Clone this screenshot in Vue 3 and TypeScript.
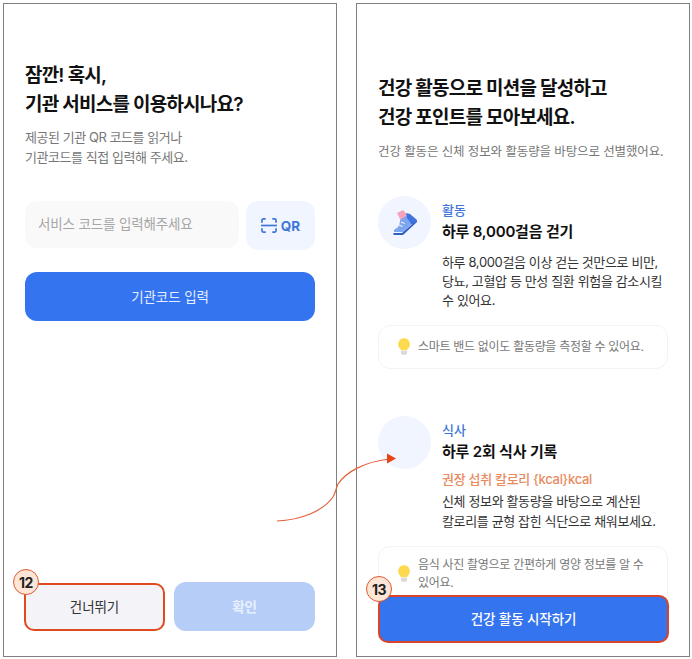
<template>
  <div class="page">
    <!-- 기관 코드 화면 -->
    <section class="phone phone-left">
      <h1 class="title">잠깐! 혹시,<br />기관 서비스를 이용하시나요?</h1>
      <p class="sub">제공된 기관 QR 코드를 읽거나<br />기관코드를 직접 입력해 주세요.</p>
      <div class="code-row">
        <div class="code-input">서비스 코드를 입력해주세요</div>
        <div class="qr-btn">
          <svg width="16" height="15" viewBox="0 0 17 16" fill="none" stroke="#3f76d8" stroke-width="1.8">
            <path d="M1 5V2.400C1 1.600 1.600 1 2.400 1H5" />
            <path d="M12 1h2.600C15.400 1 16 1.600 16 2.400V5" />
            <path d="M1 11v2.600c0 .8.6 1.400 1.400 1.400H5" />
            <path d="M12 15h2.600c.8 0 1.400-.6 1.400-1.400V11" />
            <path d="M0 8h17" />
          </svg>
          <span>QR</span>
        </div>
      </div>
      <button class="btn btn-primary btn-code">기관코드 입력</button>
      <div class="spacer"></div>
      <div class="bottom-row">
        <div class="skip-wrap">
          <button class="btn btn-skip">건너뛰기</button>
          <span class="badge badge-12">12</span>
        </div>
        <button class="btn btn-confirm">확인</button>
      </div>
    </section>

    <!-- 건강 활동 안내 화면 -->
    <section class="phone phone-right">
      <h1 class="title">건강 활동으로 미션을 달성하고<br />건강 포인트를 모아보세요.</h1>
      <p class="sub sub-right">건강 활동은 신체 정보와 활동량을 바탕으로 선별했어요.</p>

      <div v-for="item in missions" :key="item.label" class="mission">
        <div class="mission-head">
          <div class="circle">
            <svg v-if="item.shoe" width="26" height="27" viewBox="0 0 26 27">
              <path d="M5 4 11 1l5 6-7 5z" fill="#f7a3bd" />
              <path d="M8 11l6-4 10 4-13 12H2c-.5-2 .5-3 2-3.500 2-.5 4-4 4-8.500z" fill="#7da6f0" />
              <path d="M14 4l4 1 7 6-5 5-5-7z" fill="#3f74dc" />
              <path d="M1.500 24H10l15-13v2L11 26H2.500c-1 0-1.500-1-1-2z" fill="#2f5fc4" />
              <path d="M7 16l3.500 1.500M9 13l3.500 1.500" stroke="#fff" stroke-width="1" />
            </svg>
          </div>
          <div class="mission-text">
            <div class="label">{{ item.label }}</div>
            <div class="mission-title">{{ item.title }}</div>
            <div v-if="item.kcal" class="kcal">{{ item.kcal }}</div>
            <p class="desc" :class="{ 'desc-tight': item.kcal }">
              <template v-for="(line, i) in item.desc" :key="i">{{ line }}<br /></template>
            </p>
          </div>
        </div>
        <div class="tip" :class="{ 'tip-multi': item.tip.length > 1 }">
          <svg class="bulb" width="12" height="17" viewBox="0 0 14 19">
            <path d="M7 0a6.800 6.800 0 0 1 4 12.300V14H3v-1.700A6.800 6.800 0 0 1 7 0z" fill="#fdd94f" />
            <path d="M3.500 14.500h7V17c0 1-1 2-2 2h-3c-1 0-2-1-2-2z" fill="#d9d9de" />
          </svg>
          <span>
            <template v-for="(line, i) in item.tip" :key="i">{{ line }}<br v-if="i < item.tip.length - 1" /></template>
          </span>
        </div>
      </div>

      <div class="start-wrap">
        <button class="btn btn-primary btn-start">건강 활동 시작하기</button>
        <span class="badge badge-13">13</span>
      </div>
    </section>

    <!-- 화면 간 연결 화살표 -->
    <svg class="arrow" width="692" height="659" viewBox="0 0 692 659" fill="none">
      <path d="M277 521C300 520 322 512 333 497C336 492 336 488 338 484C346 472 364 462 389 459" stroke="#e4603a" stroke-width="1.200" />
      <path d="M396 458.500 387 453.500V463.500Z" fill="#ea4312" />
    </svg>
  </div>
</template>

<script setup lang="ts">
interface Mission {
  label: string;
  title: string;
  kcal?: string;
  desc: string[];
  tip: string[];
  shoe: boolean;
}

const missions: Mission[] = [
  {
    label: "활동",
    title: "하루 8,000걸음 걷기",
    desc: [
      "하루 8,000걸음 이상 걷는 것만으로 비만,",
      "당뇨, 고혈압 등 만성 질환 위험을 감소시킬",
      "수 있어요.",
    ],
    tip: ["스마트 밴드 없이도 활동량을 측정할 수 있어요."],
    shoe: true,
  },
  {
    label: "식사",
    title: "하루 2회 식사 기록",
    kcal: "권장 섭취 칼로리 {kcal}kcal",
    desc: ["신체 정보와 활동량을 바탕으로 계산된", "칼로리를 균형 잡힌 식단으로 채워보세요."],
    tip: ["음식 사진 촬영으로 간편하게 영양 정보를 알 수", "있어요."],
    shoe: false,
  },
];
</script>

<style>
html,
body {
  margin: 0;
  background: #fff;
}
</style>

<style scoped>
.page {
  position: relative;
  width: 692px;
  height: 659px;
  box-sizing: border-box;
  padding: 3px;
  display: flex;
  gap: 19px;
  font-family: Inter, "Noto Sans CJK KR", sans-serif;
  color: #111;
  overflow: hidden;
}

.phone {
  position: relative;
  width: 334px;
  height: 654px;
  box-sizing: border-box;
  border: 1px solid #808080;
  padding: 58px 21px 0;
  display: flex;
  flex-direction: column;
  flex: none;
  background: #fff;
}

.phone-right {
  padding-top: 71px;
  overflow: hidden;
}

.title {
  margin: 0;
  font-size: 19px;
  line-height: 28.500px;
  font-weight: 600;
  letter-spacing: -0.8px;
  color: #111;
}

.sub {
  margin: 9px 0 0;
  font-size: 13px;
  line-height: 19.500px;
  color: #777;
  letter-spacing: -0.45px;
}

.sub-right {
  margin-top: 10px;
  font-size: 12.500px;
  letter-spacing: -0.12px;
  white-space: nowrap;
}

.code-row {
  margin-top: 34px;
  display: flex;
  gap: 7px;
  align-items: flex-start;
}

.code-input {
  width: 214px;
  height: 47px;
  box-sizing: border-box;
  padding: 0 0 3px 13px;
  display: flex;
  align-items: center;
  border-radius: 12px;
  background: #f9f9f9;
  color: #a6a6a6;
  font-size: 13.500px;
  letter-spacing: -0.15px;
}

.qr-btn {
  width: 69px;
  height: 49px;
  border-radius: 12px;
  background: #f0f5ff;
  display: flex;
  align-items: center;
  justify-content: center;
  gap: 4px;
  color: #3f76d8;
  font-size: 13.500px;
  font-weight: 700;
}

.btn {
  border: 0;
  padding: 0 0 2px;
  font-family: inherit;
  display: flex;
  align-items: center;
  justify-content: center;
  border-radius: 12px;
  font-size: 13.500px;
  letter-spacing: -0.1px;
}

.btn-primary {
  background: #3474ee;
  color: #fff;
}

.btn-code {
  margin-top: 22px;
  height: 49px;
  width: 290px;
  color: #e6eeff;
}

.spacer {
  flex: 1;
}

.bottom-row {
  display: flex;
  gap: 9px;
  align-items: flex-start;
  margin-bottom: 25px;
}

.skip-wrap {
  position: relative;
  margin-top: 1px;
  margin-left: -1px;
}

.btn-skip {
  width: 141px;
  height: 48px;
  box-sizing: border-box;
  border: 2px solid #e04a1f;
  border-radius: 10px;
  background: #f3f3f8;
  color: #333;
}

.btn-confirm {
  width: 141px;
  height: 49px;
  background: #b6cdf7;
  color: #e8f0ff;
  font-weight: 600;
}

.badge {
  position: absolute;
  width: 26px;
  height: 26px;
  box-sizing: border-box;
  border-radius: 50%;
  border: 1.500px solid #dd5a30;
  background: #fde6d6;
  display: flex;
  align-items: center;
  justify-content: center;
  color: #222;
  font-size: 14px;
  font-weight: 700;
  letter-spacing: -0.5px;
}

.badge-12 {
  left: -11px;
  top: -14px;
}

.mission {
  margin-top: 34px;
}

.mission + .mission {
  margin-top: 47px;
}

.mission-head {
  display: flex;
  gap: 11px;
}

.circle {
  width: 53px;
  height: 53px;
  flex: none;
  border-radius: 50%;
  background: #f0f5ff;
  display: flex;
  align-items: center;
  justify-content: center;
}

.mission-text {
  padding-top: 5px;
}

.label {
  font-size: 13px;
  line-height: 18px;
  color: #3f76d8;
  font-weight: 500;
}

.mission-title {
  margin-top: 2px;
  font-size: 15px;
  line-height: 22px;
  font-weight: 600;
  letter-spacing: -0.2px;
  color: #111;
}

.kcal {
  margin-top: 7px;
  font-size: 13px;
  line-height: 19px;
  font-weight: 500;
  color: #e98a5e;
  letter-spacing: -0.3px;
}

.desc {
  margin: 10px 0 0;
  font-size: 13px;
  line-height: 19px;
  color: #333;
  letter-spacing: -0.37px;
  white-space: nowrap;
}

.desc-tight {
  margin-top: 2px;
  line-height: 20px;
}

.tip {
  margin-top: 15px;
  width: 290px;
  box-sizing: border-box;
  border: 1px solid #f3f3f5;
  border-radius: 12px;
  padding: 12px 12px 12px 19px;
  display: flex;
  align-items: center;
  gap: 8px;
  font-size: 12px;
  line-height: 18px;
  color: #777;
  letter-spacing: -0.3px;
}

.tip-multi {
  padding-top: 9px;
}

.bulb {
  flex: none;
}

.start-wrap {
  position: absolute;
  left: 21px;
  top: 591px;
}

.btn-start {
  width: 291px;
  height: 48px;
  box-sizing: border-box;
  border: 2px solid #d8432a;
  border-radius: 10px;
  background: #3474ee;
  color: #fff;
  font-weight: 500;
}

.badge-13 {
  left: -12px;
  top: -19px;
}

.arrow {
  position: absolute;
  left: 0;
  top: 0;
  pointer-events: none;
}
</style>
